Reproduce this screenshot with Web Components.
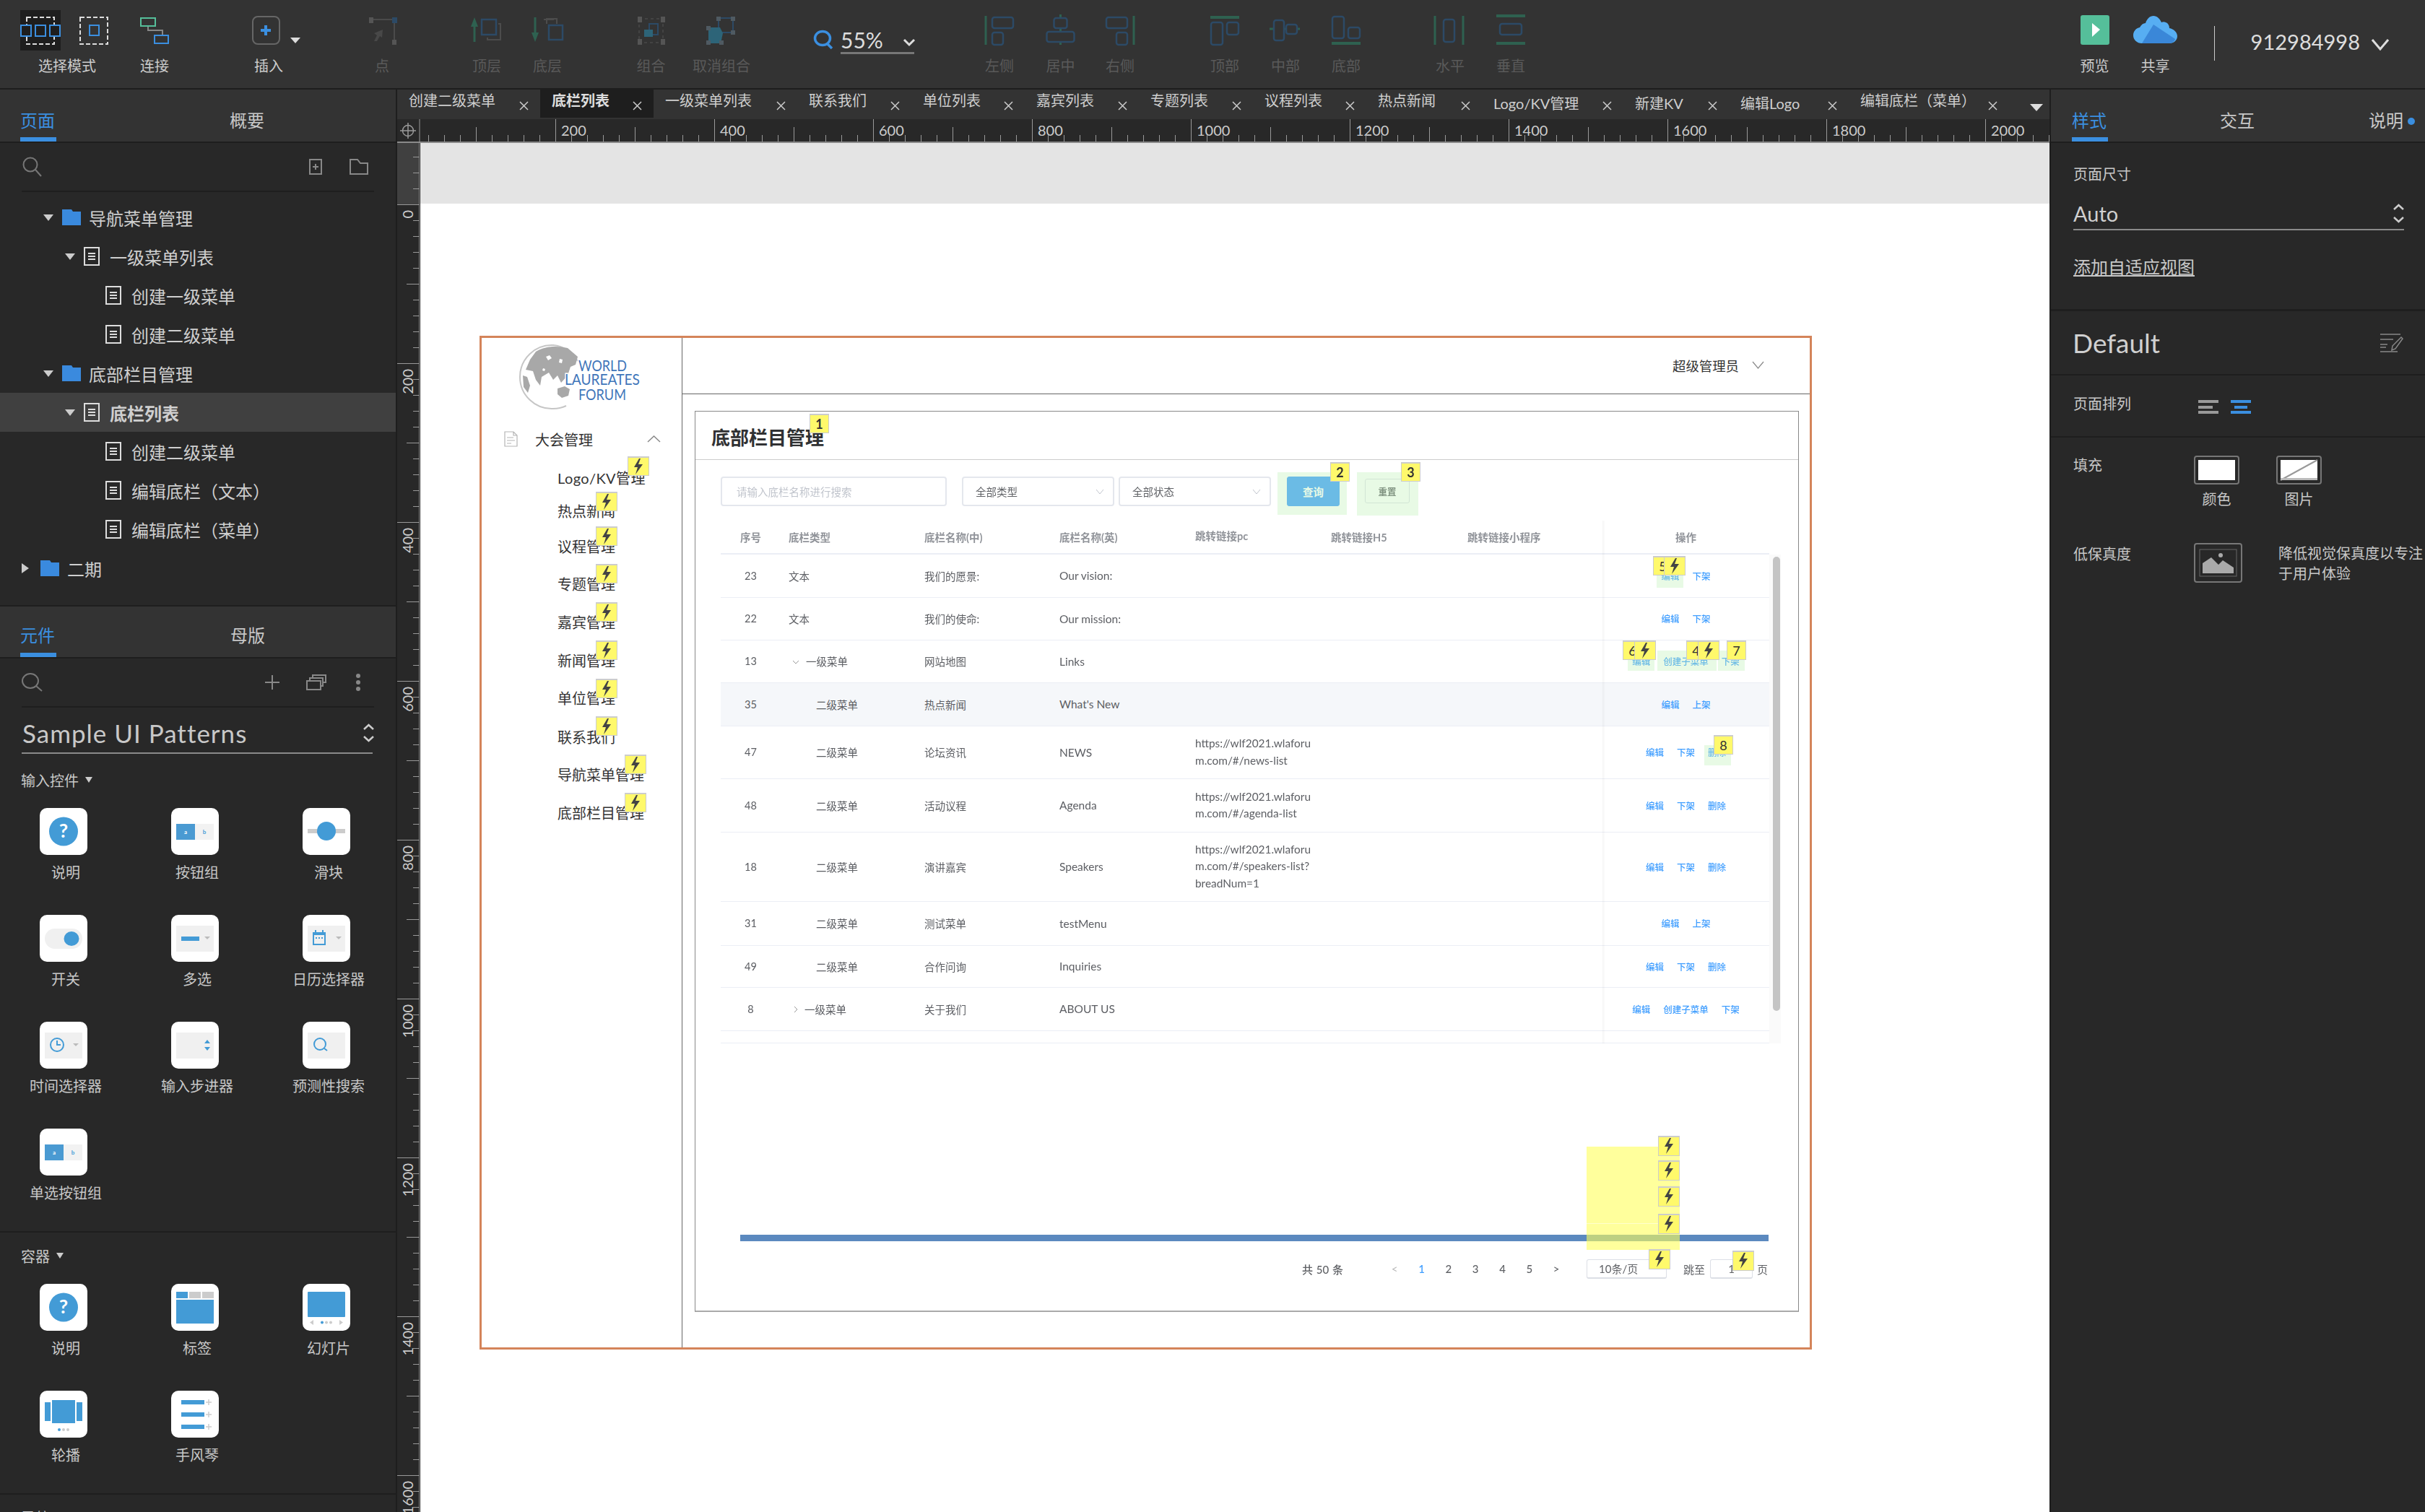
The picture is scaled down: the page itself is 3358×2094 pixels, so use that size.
<!DOCTYPE html>
<html lang="zh-CN">
<head>
<meta charset="utf-8">
<title>底栏列表</title>
<style>
  html, body { margin: 0; padding: 0; background: #1e1e1e; }
  body { width: 3358px; height: 2094px; overflow: hidden; font-family: "Lato", "Noto Sans CJK SC", sans-serif; }
  svg { display: block; flex: none; overflow: visible; }
</style>
</head>
<body>

<ax-app>
  <ax-toolbar slot="top">
    <ax-tool label="选择模式" style="margin-left:53px">
      <svg width="130" height="40" viewBox="28 22 130 40" fill="none">
        <rect x="28" y="14" width="56" height="56" fill="#1e1e1e"/>
        <rect x="37" y="24" width="38" height="37" stroke="#ddd" stroke-width="2" stroke-dasharray="6 3"/>
        <path d="M29 35h14v15h-14zM49 35h14v15h-14zM69 35h14v15h-14z" stroke="#3b8fe0" stroke-width="2" fill="#1e1e1e"/>
        <rect x="111" y="24" width="38" height="37" stroke="#ddd" stroke-width="2" stroke-dasharray="6 3"/>
        <rect x="124" y="35" width="13" height="14" stroke="#3b8fe0" stroke-width="2"/>
      </svg>
    </ax-tool>
    <ax-tool label="连接" style="margin-left:41px">
      <svg width="40" height="40" viewBox="194 22 40 40" fill="none">
        <path d="M205 36v6h20v7" stroke="#888" stroke-width="2"/>
        <rect x="195" y="25" width="20" height="11" stroke="#55bf9a" stroke-width="2"/>
        <rect x="214" y="49" width="19" height="11" stroke="#3b8fe0" stroke-width="2"/>
      </svg>
    </ax-tool>
    <ax-tool label="插入" style="margin-left:78px">
      <svg width="94" height="40" viewBox="325 22 94 40" fill="none">
        <rect x="350" y="23" width="37" height="38" rx="7" stroke="#666" stroke-width="2"/>
        <path d="M368 35v14M361 42h14" stroke="#3b8fe0" stroke-width="4"/>
        <path d="M402 52h14l-7 8z" fill="#ddd"/>
      </svg>
    </ax-tool>
    <ax-tool off label="点" style="margin-left:77px">
      <svg width="40" height="40" viewBox="509 22 40 40" fill="none">
        <path d="M517 27h27M546 32v23" stroke="#4a4a4a" stroke-width="2"/>
        <rect x="511" y="24" width="6" height="8" fill="#555"/>
        <rect x="543" y="24" width="7" height="8" fill="#2c4a66"/>
        <rect x="543" y="55" width="6" height="7" fill="#555"/>
        <path d="M530 41l-12 5 4 3-4 8 4 0 4-7 3 2z" fill="#484848"/>
      </svg>
    </ax-tool>
    <ax-tool off label="顶层" style="margin-left:65px">
      <svg width="44" height="40" viewBox="652 22 44 40" fill="none">
        <path d="M657 58V30" stroke="#2e6150" stroke-width="3"/><path d="M652 37l5-13 5 13z" fill="#2e6150"/>
        <path d="M690 33h3v22h-18v-3M686 30v0" stroke="#4c4c4c" stroke-width="2"/>
        <rect x="667" y="27" width="20" height="21" stroke="#2c4a66" stroke-width="2.5" fill="#333"/>
      </svg>
    </ax-tool>
    <ax-tool off label="底层" style="margin-left:4px">
      <svg width="44" height="40" viewBox="736 22 44 40" fill="none">
        <path d="M741 24v28" stroke="#2e6150" stroke-width="3"/><path d="M736 45l5 13 5-13z" fill="#2e6150"/>
        <path d="M757 33v-7h14v7M753 27h14" stroke="#4c4c4c" stroke-width="2"/>
        <rect x="760" y="35" width="19" height="20" stroke="#2c4a66" stroke-width="2.5"/>
      </svg>
    </ax-tool>
    <ax-tool off label="组合" style="margin-left:63.5px">
      <svg width="40" height="40" viewBox="882 22 40 40" fill="none">
        <rect x="885" y="26" width="33" height="33" stroke="#4a4a4a" stroke-width="1.5" stroke-dasharray="4 4"/>
        <path d="M883 23h6v8h-6zM915 23h6v8h-6zM883 54h6v8h-6zM915 54h6v8h-6z" fill="#555"/>
        <rect x="899" y="33" width="12" height="15" stroke="#2c4a66" stroke-width="2"/>
        <rect x="892" y="41" width="12" height="10" fill="#2d6478"/>
      </svg>
    </ax-tool>
    <ax-tool off label="取消组合" style="margin-left:17.5px">
      <svg width="40" height="40" viewBox="979 22 40 40" fill="none">
        <rect x="995" y="25" width="20" height="20" stroke="#2c4a66" stroke-width="2"/>
        <path d="M981 38h16l4 8-3 14h-17z" fill="#2d6478"/>
        <path d="M978 36h6v6h-6zM978 56h6v6h-6zM996 56h6v6h-6zM992 23h6v6h-6zM1012 23h6v6h-6zM1012 42h6v6h-6z" fill="#4f5a62"/>
      </svg>
    </ax-tool>
    <ax-zoom-box style="margin-left:88px"></ax-zoom-box>
    <ax-tool off label="左侧" style="margin-left:76px">
      <svg width="44" height="40" viewBox="1362 22 44 40" fill="none" stroke="#2c4a66" stroke-width="2.5">
        <path d="M1365 22v40" stroke="#2e6150" stroke-width="3"/>
        <rect x="1374" y="24" width="29" height="15" rx="3"/><rect x="1374" y="45" width="15" height="17" rx="3"/>
      </svg>
    </ax-tool>
    <ax-tool off label="居中" style="margin-left:4.5px">
      <svg width="44" height="40" viewBox="1446.5 22 44 40" fill="none" stroke="#2c4a66" stroke-width="2.5">
        <path d="M1468 20v42" stroke="#2e6150" stroke-width="3"/>
        <rect x="1459" y="25" width="18" height="14" rx="3" fill="#333"/><rect x="1449" y="44" width="38" height="14" rx="3" fill="#333"/>
      </svg>
    </ax-tool>
    <ax-tool off label="右侧" style="margin-left:2.5px">
      <svg width="44" height="40" viewBox="1529 22 44 40" fill="none" stroke="#2c4a66" stroke-width="2.5">
        <path d="M1570 22v40" stroke="#2e6150" stroke-width="3"/>
        <rect x="1532" y="24" width="29" height="15" rx="3"/><rect x="1546" y="45" width="15" height="17" rx="3"/>
      </svg>
    </ax-tool>
    <ax-tool off label="顶部" style="margin-left:65px">
      <svg width="44" height="40" viewBox="1674 22 44 40" fill="none" stroke="#2c4a66" stroke-width="2.5">
        <path d="M1676 24h40" stroke="#2e6150" stroke-width="4"/>
        <rect x="1677" y="31" width="16" height="31" rx="3"/><rect x="1699" y="31" width="16" height="17" rx="3"/>
      </svg>
    </ax-tool>
    <ax-tool off label="中部" style="margin-left:4px">
      <svg width="44" height="40" viewBox="1758 22 44 40" fill="none" stroke="#2c4a66" stroke-width="2.5">
        <path d="M1758 40h42" stroke="#2e6150" stroke-width="3"/>
        <rect x="1764" y="28" width="14" height="28" rx="3" fill="#333"/><rect x="1781" y="34" width="15" height="13" rx="3" fill="#333"/>
      </svg>
    </ax-tool>
    <ax-tool off label="底部" style="margin-left:4px">
      <svg width="44" height="40" viewBox="1842 22 44 40" fill="none" stroke="#2c4a66" stroke-width="2.5">
        <path d="M1844 60h40" stroke="#2e6150" stroke-width="4"/>
        <rect x="1845" y="23" width="16" height="30" rx="3"/><rect x="1867" y="38" width="16" height="15" rx="3"/>
      </svg>
    </ax-tool>
    <ax-tool off label="水平" style="margin-left:64px">
      <svg width="44" height="40" viewBox="1986 22 44 40" fill="none" stroke="#2c4a66" stroke-width="2.5">
        <path d="M1987 22v40M2026 22v40" stroke="#2e6150" stroke-width="3"/>
        <rect x="1999" y="27" width="15" height="31" rx="3"/>
      </svg>
    </ax-tool>
    <ax-tool off label="垂直" style="margin-left:4px">
      <svg width="44" height="40" viewBox="2070 22 44 40" fill="none" stroke="#2c4a66" stroke-width="2.5">
        <path d="M2072 22h40M2072 60h40" stroke="#2e6150" stroke-width="4"/>
        <rect x="2077" y="33" width="30" height="15" rx="3"/>
      </svg>
    </ax-tool>

    <ax-tool label="预览" style="margin-left:auto">
      <svg width="40" height="40" viewBox="2881 22 40 40">
        <rect x="2881" y="21" width="40" height="41" rx="3" fill="#55bf9a"/>
        <path d="M2897 32l11 9-11 10z" fill="#fff"/>
      </svg>
    </ax-tool>
    <ax-tool label="共享" style="margin-left:4px">
      <svg width="62" height="40" viewBox="2954 22 62 40">
        <path d="M2966 60c-7 0-12-5-12-11 0-6 4-10 9-11 2-4 5-6 8-6 2-6 6-10 11-10 5 0 9 4 11 9 2-1 4-1 6 0 3 1 5 4 5 8 6 1 11 6 11 11 0 6-5 10-11 10z" fill="#57aef2"/>
        <path d="M2982 34l30 20c-1 4-5 6-9 6h-37z" fill="#3a87d8"/>
      </svg>
    </ax-tool>
    <ax-user style="margin-left:41px">912984998</ax-user>
  </ax-toolbar>

  <ax-left slot="left">
    <ax-phead>
      <ax-ptab active style="margin-left:28px">页面</ax-ptab>
      <ax-ptab style="margin-left:240px">概要</ax-ptab>
    </ax-phead>
    <ax-searchrow>
      <svg width="28" height="28" viewBox="0 0 28 28" fill="none" stroke="#777" stroke-width="2"><circle cx="12" cy="11" r="9.5"/><path d="M19 18l8 9"/></svg>
      <svg width="18" height="22" viewBox="0 0 18 22" fill="none" stroke="#888" stroke-width="2" style="margin-left:auto"><rect x="1" y="1" width="16" height="20"/><path d="M9 7v8M5 11h8"/></svg>
      <svg width="26" height="22" viewBox="0 0 26 22" fill="none" stroke="#888" stroke-width="2" style="margin:0 8px 0 38px"><path d="M1 21V1h10l4 5h10v15z"/></svg>
    </ax-searchrow>
    <ax-tree>
      <ax-tree-row lv="0" arrow="down" icon="folder">导航菜单管理</ax-tree-row>
      <ax-tree-row lv="1" arrow="down" icon="doc">一级菜单列表</ax-tree-row>
      <ax-tree-row lv="2" icon="doc">创建一级菜单</ax-tree-row>
      <ax-tree-row lv="2" icon="doc">创建二级菜单</ax-tree-row>
      <ax-tree-row lv="0" arrow="down" icon="folder">底部栏目管理</ax-tree-row>
      <ax-tree-row lv="1" arrow="down" icon="doc" selected>底栏列表</ax-tree-row>
      <ax-tree-row lv="2" icon="doc">创建二级菜单</ax-tree-row>
      <ax-tree-row lv="2" icon="doc">编辑底栏（文本）</ax-tree-row>
      <ax-tree-row lv="2" icon="doc">编辑底栏（菜单）</ax-tree-row>
      <ax-tree-row lv="-1" arrow="right" icon="folder">二期</ax-tree-row>
    </ax-tree>
    <ax-phead small>
      <ax-ptab small active style="margin-left:28px">元件</ax-ptab>
      <ax-ptab small style="margin-left:241px">母版</ax-ptab>
    </ax-phead>
    <ax-searchrow>
      <svg width="28" height="26" viewBox="0 0 28 26" fill="none" stroke="#777" stroke-width="2"><ellipse cx="12" cy="11" rx="11" ry="10"/><path d="M20 18l8 7"/></svg>
      <svg width="20" height="20" viewBox="0 0 20 20" stroke="#888" stroke-width="2" style="margin-left:auto"><path d="M10 0v20M0 10h20"/></svg>
      <svg width="28" height="22" viewBox="0 0 28 22" fill="none" stroke="#888" stroke-width="2" style="margin-left:37px"><rect x="1" y="9" width="19" height="12"/><path d="M5 9V5h18v11h-3M9 5V1h18v10h-4"/></svg>
      <svg width="6" height="24" viewBox="0 0 6 24" fill="#888" style="margin:0 19px 0 41px"><circle cx="3" cy="3" r="3"/><circle cx="3" cy="12" r="3"/><circle cx="3" cy="21" r="3"/></svg>
    </ax-searchrow>
    <ax-libselect>Sample UI Patterns</ax-libselect>
    <ax-group title="输入控件">
      <ax-widget label="说明"><svg width="66" height="65" viewBox="0 0 66 65"><ellipse cx="33" cy="32.5" rx="20" ry="20" fill="#439bd6"/><text x="33" y="41" text-anchor="middle" font-size="27" font-weight="700" fill="#fff" font-family="Lato">?</text></svg></ax-widget>
      <ax-widget label="按钮组"><svg width="66" height="65" viewBox="0 0 66 65"><rect x="7" y="22" width="26" height="22" fill="#4a9ad2"/><rect x="33" y="22" width="26" height="22" fill="#f2f2f2"/><text x="20" y="36" text-anchor="middle" font-size="8" font-weight="700" fill="#fff" font-family="Lato">a</text><text x="46" y="36" text-anchor="middle" font-size="8" font-weight="700" fill="#439bd6" font-family="Lato">b</text></svg></ax-widget>
      <ax-widget label="滑块"><svg width="66" height="65" viewBox="0 0 66 65"><rect x="7" y="29" width="52" height="6" fill="#ccc"/><circle cx="33" cy="32" r="13" fill="#439bd6"/></svg></ax-widget>
      <ax-widget label="开关"><svg width="66" height="65" viewBox="0 0 66 65"><rect x="7" y="19" width="52" height="28" rx="14" fill="#f0f0f0"/><ellipse cx="44" cy="33" rx="10.5" ry="10" fill="#439bd6"/></svg></ax-widget>
      <ax-widget label="多选"><svg width="66" height="65" viewBox="0 0 66 65"><rect x="7" y="15" width="52" height="36" fill="#f0f0f0"/><rect x="14" y="30" width="25" height="6" fill="#439bd6"/><path d="M46 30h8l-4 4z" fill="#bbb"/></svg></ax-widget>
      <ax-widget label="日历选择器"><svg width="66" height="65" viewBox="0 0 66 65"><rect x="7" y="15" width="52" height="36" fill="#f0f0f0"/><path d="M14 24h18v18H14z" fill="#439bd6"/><path d="M18 21v4M28 21v4" stroke="#439bd6" stroke-width="2"/><rect x="16" y="28" width="14" height="12" fill="#f0f0f0"/><path d="M18 32h2M22 32h2M26 32h2" stroke="#439bd6" stroke-width="2"/><path d="M46 30h8l-4 4z" fill="#bbb"/></svg></ax-widget>
      <ax-widget label="时间选择器"><svg width="66" height="65" viewBox="0 0 66 65"><rect x="7" y="15" width="52" height="36" fill="#f0f0f0"/><circle cx="24" cy="32" r="9" fill="none" stroke="#439bd6" stroke-width="2"/><path d="M24 26v6h5" fill="none" stroke="#439bd6" stroke-width="2"/><path d="M46 30h8l-4 4z" fill="#bbb"/></svg></ax-widget>
      <ax-widget label="输入步进器"><svg width="66" height="65" viewBox="0 0 66 65"><rect x="7" y="15" width="52" height="36" fill="#f0f0f0"/><path d="M46 30l4-5 4 5zM46 35h8l-4 5z" fill="#439bd6"/></svg></ax-widget>
      <ax-widget label="预测性搜索"><svg width="66" height="65" viewBox="0 0 66 65"><rect x="7" y="15" width="52" height="36" fill="#f0f0f0"/><ellipse cx="24" cy="31" rx="8" ry="8" fill="none" stroke="#439bd6" stroke-width="2"/><path d="M30 37l4 3" stroke="#439bd6" stroke-width="2"/></svg></ax-widget>
      <ax-widget label="单选按钮组"><svg width="66" height="65" viewBox="0 0 66 65"><rect x="7" y="22" width="26" height="22" fill="#4a9ad2"/><rect x="33" y="22" width="26" height="22" fill="#f2f2f2"/><text x="20" y="36" text-anchor="middle" font-size="8" font-weight="700" fill="#fff" font-family="Lato">a</text><text x="46" y="36" text-anchor="middle" font-size="8" font-weight="700" fill="#439bd6" font-family="Lato">b</text></svg></ax-widget>
    </ax-group>
    <ax-group title="容器" style="padding-top:20px">
      <ax-widget label="说明"><svg width="66" height="65" viewBox="0 0 66 65"><ellipse cx="33" cy="32.5" rx="20" ry="20" fill="#439bd6"/><text x="33" y="41" text-anchor="middle" font-size="27" font-weight="700" fill="#fff" font-family="Lato">?</text></svg></ax-widget>
      <ax-widget label="标签"><svg width="66" height="65" viewBox="0 0 66 65"><rect x="7" y="11" width="16" height="9" fill="#439bd6"/><rect x="25" y="11" width="16" height="9" fill="#ccc"/><rect x="43" y="11" width="16" height="9" fill="#ccc"/><rect x="7" y="22" width="52" height="33" fill="#439bd6"/></svg></ax-widget>
      <ax-widget label="幻灯片"><svg width="66" height="65" viewBox="0 0 66 65"><rect x="7" y="11" width="52" height="35" rx="1" fill="#439bd6"/><path d="M15 50v7l-5-3.500zM51 50v7l5-3.500z" fill="#ccc"/><circle cx="27" cy="53.500" r="2" fill="#439bd6"/><circle cx="33" cy="53.500" r="2" fill="#ccc"/><circle cx="39" cy="53.500" r="2" fill="#ccc"/></svg></ax-widget>
      <ax-widget label="轮播"><svg width="66" height="65" viewBox="0 0 66 65"><rect x="7" y="16" width="8" height="26" fill="#439bd6"/><rect x="17" y="13" width="32" height="32" fill="#439bd6"/><rect x="51" y="16" width="8" height="26" fill="#439bd6"/><circle cx="27" cy="54" r="2" fill="#439bd6"/><circle cx="33" cy="54" r="2" fill="#ccc"/><circle cx="39" cy="54" r="2" fill="#ccc"/></svg></ax-widget>
      <ax-widget label="手风琴"><svg width="66" height="65" viewBox="0 0 66 65"><path d="M14 13h32v6H14zM14 30h32v6H14zM14 47h32v6H14z" fill="#439bd6"/><path d="M48 16h8M52 12v8M48 33h8M52 29v8M48 50h8M52 46v8" stroke="#ccc" stroke-width="1.500"/></svg></ax-widget>
    </ax-group>
    <ax-group title="导航" style="padding-top:19px"></ax-group>
  </ax-left>

  <ax-center slot="center">
    <ax-tabs>
      <ax-tab w="198">创建二级菜单</ax-tab>
      <ax-tab w="157" active>底栏列表</ax-tab>
      <ax-tab w="199">一级菜单列表</ax-tab>
      <ax-tab w="158">联系我们</ax-tab>
      <ax-tab w="157">单位列表</ax-tab>
      <ax-tab w="158">嘉宾列表</ax-tab>
      <ax-tab w="158">专题列表</ax-tab>
      <ax-tab w="157">议程列表</ax-tab>
      <ax-tab w="160">热点新闻</ax-tab>
      <ax-tab w="196" low>Logo/KV管理</ax-tab>
      <ax-tab w="146" low>新建KV</ax-tab>
      <ax-tab w="166" low>编辑Logo</ax-tab>
      <ax-tab w="222">编辑底栏（菜单）</ax-tab>
    </ax-tabs>
    <ax-ruler-h></ax-ruler-h>
    <ax-ruler-v></ax-ruler-v>
    <ax-canvas>
      <wf-artboard>
        <wf-sidebar>
          <svg slot="logo" width="277" height="128" viewBox="667 468 277 128">
            <path d="M800 500A44 44 0 0 0 766 478A44 44 0 0 0 720 522A44 44 0 0 0 766 566A44 44 0 0 0 784 562" fill="none" stroke="#c6c6c6" stroke-width="2"/>
            <path d="M742 487C752 480 770 478 786 482L800 494L797 505L790 508L786 520L777 530L772 520L766 526L760 516L750 522L748 534L742 526L738 514L728 512L734 498Z" fill="#a8a8a8"/>
            <path d="M724 520l6 2 4 12-3 10-6-8z" fill="#a8a8a8"/>
            <path d="M772 538l10-3 7 4-2 9-9 3-6-5z" fill="#a8a8a8"/>
            <path d="M756 494l5-2 3 4-5 3zM775 497l4 1-1 5-4-1zM752 510l3 1-1 3-3-1z" fill="#fff"/>
            <g fill="#3f76ba" font-family="Lato" font-size="22" stroke="#fff" stroke-width="3" paint-order="stroke">
              <text x="801" y="514" textLength="67" lengthAdjust="spacingAndGlyphs">WORLD</text>
              <text x="782" y="533" textLength="104" lengthAdjust="spacingAndGlyphs">LAUREATES</text>
              <text x="801" y="554" textLength="66" lengthAdjust="spacingAndGlyphs">FORUM</text>
            </g>
          </svg>
          <wf-menu-head>大会管理</wf-menu-head>
          <wf-menu-item h="48" style="margin-top:18px;letter-spacing:.4px">Logo/KV管理<wf-note bolt style="left:97px;top:-6px"></wf-note></wf-menu-item>
          <wf-menu-item h="45">热点新闻<wf-note bolt style="left:52.500px;top:-5px"></wf-note></wf-menu-item>
          <wf-menu-item h="52">议程管理<wf-note bolt style="left:52.500px;top:-2px"></wf-note></wf-menu-item>
          <wf-menu-item h="53">专题管理<wf-note bolt style="left:52.500px;top:-2px"></wf-note></wf-menu-item>
          <wf-menu-item h="52">嘉宾管理<wf-note bolt style="left:52.500px;top:-2px"></wf-note></wf-menu-item>
          <wf-menu-item h="54">新闻管理<wf-note bolt style="left:52.500px;top:-1px"></wf-note></wf-menu-item>
          <wf-menu-item h="51">单位管理<wf-note bolt style="left:52.500px;top:-2px"></wf-note></wf-menu-item>
          <wf-menu-item h="56">联系我们<wf-note bolt style="left:52.500px;top:-1px"></wf-note></wf-menu-item>
          <wf-menu-item h="49">导航菜单管理<wf-note bolt style="left:93px;top:-4px"></wf-note></wf-menu-item>
          <wf-menu-item h="56">底部栏目管理<wf-note bolt style="left:93px;top:0"></wf-note></wf-menu-item>
        </wf-sidebar>
        <wf-main>
          <wf-topbar>超级管理员</wf-topbar>
          <wf-card>
            <wf-card-head>底部栏目管理<wf-note n="1" style="left:158px;top:3px"></wf-note></wf-card-head>
            <wf-filter>
              <wf-field w="313" ph>请输入底栏名称进行搜索</wf-field>
              <wf-field w="211" chevron style="margin-left:21px">全部类型</wf-field>
              <wf-field w="211" chevron style="margin-left:6px">全部状态</wf-field>
              <wf-btn primary style="margin-left:22px">查询<wf-hot style="left:-14px;top:-7px;width:96px;height:59px"></wf-hot><wf-note n="2" style="left:59px;top:-21px"></wf-note></wf-btn>
              <wf-btn style="margin-left:35px">重置<wf-hot style="left:-12px;top:-10px;width:85px;height:60px"></wf-hot><wf-note n="3" style="left:49px;top:-24px"></wf-note></wf-btn>
            </wf-filter>
            <wf-table>
              <wf-row slot="head" head style="height:47px" no="序号" type="底栏类型" cn="底栏名称(中)" en="底栏名称(英)" pc="跳转链接pc" h5="跳转链接H5" mini="跳转链接小程序" ops="操作"></wf-row>
              <wf-row style="height:60px" no="23" type="文本" cn="我们的愿景:" en="Our vision:" ops="编辑 下架">
                <wf-hot style="left:1296px;top:19px;width:37px;height:27px"></wf-hot>
                <wf-note n="5" style="left:1291px;top:2.500px"></wf-note><wf-note bolt style="left:1306px;top:2.500px"></wf-note>
              </wf-row>
              <wf-row style="height:59px" no="22" type="文本" cn="我们的使命:" en="Our mission:" ops="编辑 下架"></wf-row>
              <wf-row style="height:59px" no="13" type="一级菜单" lv="1" cn="网站地图" en="Links" ops="编辑 创建子菜单 下架">
                <wf-hot style="left:1256px;top:14px;width:37px;height:28px"></wf-hot><wf-hot style="left:1297px;top:14px;width:82px;height:28px"></wf-hot><wf-hot style="left:1381px;top:14px;width:37px;height:28px"></wf-hot>
                <wf-note n="6" style="left:1249px;top:0"></wf-note><wf-note bolt style="left:1264.500px;top:0"></wf-note>
                <wf-note n="4" style="left:1337px;top:0"></wf-note><wf-note bolt style="left:1352.500px;top:0"></wf-note>
                <wf-note n="7" style="left:1393px;top:0"></wf-note>
              </wf-row>
              <wf-row style="height:60.500px" hover no="35" type="二级菜单" lv="2" cn="热点新闻" en="What's New" ops="编辑 上架"></wf-row>
              <wf-row style="height:72.500px" no="47" type="二级菜单" lv="2" cn="论坛资讯" en="NEWS" pc="https://wlf2021.wlaforu|m.com/#/news-list" ops="编辑 下架 删除">
                <wf-hot style="left:1362px;top:25.500px;width:37px;height:28px"></wf-hot>
                <wf-note n="8" style="left:1375px;top:11.500px"></wf-note>
              </wf-row>
              <wf-row style="height:74px" no="48" type="二级菜单" lv="2" cn="活动议程" en="Agenda" pc="https://wlf2021.wlaforu|m.com/#/agenda-list" ops="编辑 下架 删除"></wf-row>
              <wf-row style="height:96px" no="18" type="二级菜单" lv="2" cn="演讲嘉宾" en="Speakers" pc="https://wlf2021.wlaforu|m.com/#/speakers-list?|breadNum=1" ops="编辑 下架 删除"></wf-row>
              <wf-row style="height:61px" no="31" type="二级菜单" lv="2" cn="测试菜单" en="testMenu" ops="编辑 上架"></wf-row>
              <wf-row style="height:58px" no="49" type="二级菜单" lv="2" cn="合作问询" en="Inquiries" ops="编辑 下架 删除"></wf-row>
              <wf-row style="height:60px" no="8" type="一级菜单" lv="1" closed cn="关于我们" en="ABOUT US" ops="编辑 创建子菜单 下架"></wf-row>
              <wf-row style="height:17px" blank></wf-row>
            </wf-table>
            <wf-bar></wf-bar>
            <wf-pager></wf-pager>
          </wf-card>
        </wf-main>
      </wf-artboard>
    </ax-canvas>
  </ax-center>

  <ax-right slot="right"></ax-right>
</ax-app>

<script>
// shared bolt used by the note badges
const BOLT = '<svg width="16" height="22" viewBox="0 0 16 22"><path d="M9 0L2 12h5l-3 10 10-14H8l3-8z" fill="#444"/></svg>';
const CJK = '"Lato", "Noto Sans CJK SC", sans-serif';

class Box extends HTMLElement {
    connectedCallback() {
        if (this.shadowRoot) return;
        let root = this.attachShadow({mode: 'open'});
        root.innerHTML = '<style>' + this.css() + '</style>' + this.html();
    }
    css() { return ':host{display:block}'; }
    html() { return '<slot></slot>'; }
}

function reg(name, css, html) {
    customElements.define(name, class extends Box {
        css() { return typeof css === 'function' ? css.call(this) : css; }
        html() { return typeof html === 'function' ? html.call(this) : (html || '<slot></slot>'); }
    });
}

/* --- app frame --- */
reg('ax-app', `:host{display:grid;grid-template-columns:548px 2290px 520px;grid-template-rows:122px 1970px;row-gap:2px;width:3358px;height:2094px;background:#1e1e1e;overflow:hidden;font-family:${CJK}}
  .top{grid-column:1/4}.c{margin-left:2px;min-width:0}.r{margin-left:2px}`,
  `<div class="top"><slot name="top"></slot></div><div><slot name="left"></slot></div><div class="c"><slot name="center"></slot></div><div class="r"><slot name="right"></slot></div>`);

reg('ax-toolbar', `:host{display:flex;height:122px;background:#333}`);

reg('ax-tool', `:host{display:flex;flex:none;flex-direction:column;align-items:center;width:80px;padding-top:22px;color:#ccc;font-size:20px}
  :host([off]){color:#5a5a5a}
  .icon{height:40px;display:flex;justify-content:center}
  .label{margin-top:17px;line-height:24px;white-space:nowrap}`,
  function() { return `<div class="icon"><slot></slot></div><div class="label">${this.getAttribute('label')}</div>`; });

reg('ax-zoom-box', `:host{display:flex;flex:none;align-items:flex-start;width:141px;height:122px}
  .v{box-sizing:border-box;width:102px;height:33px;margin:42px 0 0 10px;border-bottom:3px solid #777;color:#ddd;font-size:30px;line-height:26px;position:relative}
  svg{display:block;overflow:visible}`,
  `<svg width="27" height="26" viewBox="0 0 27 26" fill="none" stroke="#3b8fe0" stroke-width="3.500" style="margin-top:42px;flex:none"><ellipse cx="12" cy="11" rx="10.500" ry="9.500"/><path d="M18 18l7 7"/></svg>
   <div class="v">55%<svg width="16" height="10" viewBox="0 0 16 10" fill="none" stroke="#ddd" stroke-width="3" style="position:absolute;right:-1px;top:12px"><path d="M1 1l7 7 7-7"/></svg></div>`);

reg('ax-user', `:host{display:flex;align-items:flex-start;flex:none;padding-right:50px;color:#ddd;font-size:29px}
  .d{width:1px;height:48px;margin-top:36px;background:#ccc;margin-right:50px}
  .t{margin-top:39px;line-height:38px;white-space:nowrap}
  svg{display:block;margin:54px 0 0 16px}`,
  `<div class="d"></div><div class="t"><slot></slot></div><svg width="24" height="16" viewBox="0 0 24 16" fill="none" stroke="#ddd" stroke-width="3"><path d="M1 1l11 13L23 1"/></svg>`);

/* --- left panel --- */
reg('ax-left', `:host{display:block;width:548px;height:1970px;background:#282828;overflow:hidden;color:#c8c8c8}`);

reg('ax-phead', `:host{display:flex;height:72px;background:#333;border-bottom:2px solid #1e1e1e}
  :host([small]){height:70px;margin-top:24px;border-top:2px solid #1e1e1e}`);

reg('ax-ptab', `:host{box-sizing:border-box;display:block;width:50px;height:72px;padding-top:28px;font-size:24px;line-height:30px;white-space:nowrap;color:#c8c8c8;border-bottom:6px solid transparent}
  :host([small]){height:70px;padding-top:25px}
  :host([active]){color:#3b8fe0;border-bottom-color:#3b8fe0}`);

reg('ax-searchrow', `:host{display:flex;align-items:center;height:66px;margin:0 30px;border-bottom:2px solid #1e1e1e;box-sizing:content-box}`);

reg('ax-tree', `:host{display:block;padding-top:8px}`);

reg('ax-tree-row', function() {
    let pad = 30 * (Number(this.getAttribute('lv')) + 2);
    let fold = this.getAttribute('icon') === 'folder';
    return `:host{display:flex;align-items:center;height:54px;padding-left:${pad}px;font-size:24px;white-space:nowrap;color:#cfcfcf}
      :host([selected]){background:#404040;font-weight:700}
      .a{width:14px;margin-right:12px;display:flex}
      .i{margin-right:${fold ? 11 : 14}px}
      svg{display:block;flex:none}`;
}, function() {
    let arrow = this.getAttribute('arrow');
    let a = '';
    if (arrow === 'down') a = '<svg width="14" height="9" viewBox="0 0 14 9"><path d="M0 0h14L7 9z" fill="#ccc"/></svg>';
    if (arrow === 'right') a = '<svg width="10" height="14" viewBox="0 0 10 14"><path d="M0 0l10 7-10 7z" fill="#ccc"/></svg>';
    let ic = this.getAttribute('icon') === 'folder'
        ? '<svg width="26" height="22" viewBox="0 0 26 22"><path d="M0 0h13l2 3h11v19H0z" fill="#3a8ade"/></svg>'
        : '<svg width="22" height="26" viewBox="0 0 22 26" fill="none" stroke="#ddd" stroke-width="2"><rect x="1" y="1" width="20" height="24"/><path d="M6 9h10M6 13h10M6 17h10"/></svg>';
    return `<div class="a">${a}</div><div class="i">${ic}</div><slot></slot>`;
});

reg('ax-libselect', `:host{display:flex;align-items:center;justify-content:space-between;box-sizing:border-box;height:64px;margin:0 32px 0 30px;padding:8px 0 0 1px;border-bottom:2px solid #8a8a8a;font-size:35px;letter-spacing:1px;color:#c8c8c8;white-space:nowrap}
  svg{display:block}`,
  `<slot></slot><svg width="15" height="26" viewBox="0 0 15 26" fill="none" stroke="#ccc" stroke-width="2.500" style="margin-right:-2px"><path d="M1 8l6.500-6L14 8M1 18l6.500 6 6.500-6"/></svg>`);

reg('ax-group', `:host{display:block;border-bottom:2px solid #1e1e1e;padding-top:24px;font-size:20px}
  .t{display:flex;align-items:center;height:24px;padding-left:29px;margin-bottom:27px;color:#c8c8c8}
  svg{display:block;margin-left:9px}
  .g{display:grid;grid-template-columns:repeat(3,182px);grid-auto-rows:148px;margin-bottom:-6px}`,
  function() { return `<div class="t">${this.getAttribute('title')}<svg width="10" height="8" viewBox="0 0 10 8"><path d="M0 0h10L5 8z" fill="#ccc"/></svg></div><div class="g"><slot></slot></div>`; });

reg('ax-widget', `:host{display:flex;flex-direction:column;align-items:center;color:#c8c8c8;font-size:20px}
  .i{margin-right:6px;width:66px;height:65px;border-radius:10px;background:#fff;overflow:hidden}
  .l{margin-top:12px;line-height:24px;white-space:nowrap}`,
  function() { return `<div class="i"><slot></slot></div><div class="l">${this.getAttribute('label')}</div>`; });

/* --- center: tabs, rulers, canvas --- */
reg('ax-center', `:host{display:grid;grid-template-columns:31px 2257px;grid-template-rows:41px 33px 1896px;width:2288px;height:1970px;overflow:hidden}
  ::slotted(ax-tabs){grid-column:1/3}
  ::slotted(ax-ruler-h){grid-column:1/3}`);

reg('ax-tabs', `:host{display:flex;height:41px;background:#333;overflow:hidden;position:relative;font-size:20px}
  svg{position:absolute;left:2261px;top:20px}`,
  `<slot></slot><svg width="18" height="10" viewBox="0 0 18 10"><path d="M0 0h18L9 10z" fill="#ddd"/></svg>`);

reg('ax-tab', function() {
    let lift = this.hasAttribute('low') ? 4 : 0;
    return `:host{box-sizing:border-box;display:flex;flex:none;justify-content:space-between;width:${this.getAttribute('w')}px;height:39px;padding:${lift}px 16px 0 16px;color:#cfcfcf;line-height:30px;white-space:nowrap}
      :host([active]){background:#1e1e1e;font-weight:700;color:#ddd}
      svg{display:block;margin:${16 - lift}px 0 0 0}`;
}, `<slot></slot><svg width="13" height="13" viewBox="0 0 13 13" fill="none" stroke="#ccc" stroke-width="1.500"><path d="M1 1l11 11M12 1L1 12"/></svg>`);

customElements.define('ax-ruler-h', class extends HTMLElement {
    constructor() {
        super();
        let root = this.attachShadow({mode: 'open'});
        let w = 2288, marks = '';
        // x here is relative to the strip, which starts at 550
        marks += '<path d="M31 0v33" stroke="#999"/>';
        for (let k = 2; 549 + 22 * k < 2838; k++) {
            let x = 549 + 22 * k - 550 + .5;
            let top = k % 10 == 0 ? 0 : k % 5 == 0 ? 11 : 22;
            marks += `<path d="M${x} ${top}V31" stroke="#999"/>`;
            if (k % 10 == 0) marks += `<text x="${x + 7.5}" y="23" font-size="20" fill="#ccc">${k * 20}</text>`;
        }
        root.innerHTML = `<style>:host{display:block;height:33px;background:#282828;font-family:${CJK}}
            svg{display:block}</style>
            <svg width="${w}" height="33" viewBox="0 0 ${w} 33" fill="none">
              <rect y="31" width="${w}" height="2" fill="#8a8a8a"/>
              <circle cx="15" cy="16" r="7.500" stroke="#999" stroke-width="1.500"/><path d="M15 5v22M4 16h22" stroke="#999" stroke-width="1.500"/>
              ${marks}
            </svg>`;
    }
});

customElements.define('ax-ruler-v', class extends HTMLElement {
    constructor() {
        super();
        let root = this.attachShadow({mode: 'open'});
        let marks = '';
        // y here is relative to the strip, which starts at 198
        for (let k = -3; 283 + 22 * k < 2094; k++) {
            let y = 283 + 22 * k - 198 + .5;
            let left = k % 10 == 0 ? 0 : k % 5 == 0 ? 13 : 22;
            marks += `<path d="M${left} ${y}H31" stroke="#999"/>`;
            if (k % 10 == 0 && k >= 0) marks += `<text transform="translate(22 ${y + 7.500}) rotate(-90)" text-anchor="end" font-size="20" fill="#ccc">${k * 20}</text>`;
        }
        root.innerHTML = `<style>:host{display:block;height:1896px;background:#282828;overflow:hidden;font-family:${CJK}}
            svg{display:block}</style>
            <svg width="31" height="1896" viewBox="0 0 31 1896" fill="none">
              <rect width="31" height="85" fill="#404040"/>
              <rect x="30" width="2" height="1896" fill="#8a8a8a"/>
              ${marks}
            </svg>`;
    }
});

reg('ax-canvas', `:host{display:block;box-sizing:border-box;height:1896px;margin-left:1px;background:linear-gradient(#e4e4e4 84px,#fff 84px);padding-top:.1px;overflow:hidden}`);

/* --- right panel --- */
reg('ax-right', `:host{display:block;width:518px;height:1970px;background:#282828;color:#c8c8c8;font-size:20px;font-family:${CJK}}
  .head{display:flex;height:72px;background:#333;border-bottom:2px solid #1e1e1e;font-size:24px;line-height:30px}
  .head div{box-sizing:border-box;width:50px;height:72px;padding-top:28px;white-space:nowrap;border-bottom:6px solid transparent}
  .head .on{color:#3b8fe0;border-bottom-color:#3b8fe0}
  .dot{display:inline-block;width:10px;height:10px;margin-left:6px;border-radius:50%;background:#3b8fe0;vertical-align:3px}
  section{box-sizing:content-box;border-bottom:2px solid #1e1e1e;padding:0 29px 0 31px;position:relative}
  .s1{height:230px;border-bottom-width:3px}
  .s2{height:87px;display:flex;align-items:center;justify-content:space-between;padding-left:30px}
  .s3{height:84px;display:flex}
  .s4{height:auto;border:0}
  .cap{line-height:24px}
  .size{display:flex;justify-content:space-between;align-items:center;box-sizing:border-box;height:48px;margin-top:18px;padding-top:3px;border-bottom:2px solid #8a8a8a;font-size:29px;color:#d0d0d0}
  .add{margin-top:36px;font-size:24px;line-height:30px;text-decoration:underline;color:#c8c8c8}
  .def{font-size:37px;color:#d0d0d0;line-height:42px}
  .row{display:flex}
  .sw{width:63px;text-align:center}
  svg{display:block}`,
  `<div class="head"><div class="on" style="margin-left:29px">样式</div><div style="margin-left:155px">交互</div><div style="margin-left:156px">说明<span class="dot"></span></div></div>
   <section class="s1">
     <div class="cap" style="padding-top:31px">页面尺寸</div>
     <div class="size">Auto<svg width="15" height="27" viewBox="0 0 15 27" fill="none" stroke="#ccc" stroke-width="2.500"><path d="M1 8l6.500-6L14 8M1 19l6.500 6 6.500-6"/></svg></div>
     <div class="add">添加自适应视图</div>
   </section>
   <section class="s2"><div class="def">Default</div>
     <svg width="32" height="26" viewBox="0 0 32 26" fill="none" stroke="#888" stroke-width="1.500" style="margin-right:1px"><path d="M0 1h28M0 8h18M0 15h10M0 19h8M0 25h24"/><path d="M29 5l2 2-10 14-5 2 1-6z"/></svg>
   </section>
   <section class="s3">
     <div class="cap" style="padding-top:27px;width:175px">页面排列</div>
     <svg width="73" height="19" viewBox="0 0 73 19" style="margin:34px 0 0 -2px">
       <path d="M0 0h28v4H0zM0 8h20v4H0zM0 15h28v4H0z" fill="#999"/>
       <path d="M45 0h28v4H45zM50 8h18v4H50zM45 15h28v4H45z" fill="#3b8fe0"/>
     </svg>
   </section>
   <section class="s4">
     <div class="row" style="height:118px">
       <div class="cap" style="padding-top:26px;width:167px">填充</div>
       <div class="sw" style="margin-top:25px">
         <svg width="63" height="40" viewBox="0 0 63 40"><rect x="1" y="1" width="61" height="38" rx="3" fill="none" stroke="#777" stroke-width="2"/><rect x="6" y="6" width="51" height="28" fill="#fff"/></svg>
         <div class="cap" style="margin-top:8px">颜色</div>
       </div>
       <div class="sw" style="margin:25px 0 0 51px">
         <svg width="63" height="40" viewBox="0 0 63 40"><rect x="1" y="1" width="61" height="38" rx="3" fill="none" stroke="#777" stroke-width="2"/><rect x="6" y="6" width="51" height="28" fill="#fff"/><path d="M6 34L57 6" stroke="#999" stroke-width="2"/><rect x="6" y="31" width="51" height="3" fill="#bbb"/></svg>
         <div class="cap" style="margin-top:8px">图片</div>
       </div>
     </div>
     <div class="row" style="margin-top:28px">
       <div class="cap" style="padding-top:3px;width:167px">低保真度</div>
       <svg width="67" height="55" viewBox="0 0 67 55" fill="none">
         <rect x="1" y="1" width="65" height="53" rx="3" stroke="#777" stroke-width="2"/><rect x="8" y="9" width="51" height="37" stroke="#666"/>
         <path d="M12 42V28l12-8 10 10 6-6 15 10v8z" fill="#aaa"/><circle cx="37" cy="17" r="3" fill="#aaa"/>
       </svg>
       <div class="cap" style="margin-left:50px;line-height:28px;white-space:nowrap;margin-right:-40px">降低视觉保真度以专注<br>于用户体验</div>
     </div>
   </section>`);

/* --- wireframe on the canvas --- */
reg('wf-artboard', `:host{display:flex;box-sizing:border-box;width:1845px;height:1404px;margin:267px 0 0 82px;border:3px solid #d4845a;background:#fff;color:#333;font-size:20px}`);

reg('wf-sidebar', `:host{display:block;box-sizing:content-box;width:277px;border-right:1px solid #666;flex:none}`,
  `<slot name="logo"></slot><slot></slot>`);

reg('wf-menu-head', `:host{display:flex;align-items:center;height:24px;padding:0 29px 0 31px;font-size:20px;color:#333}
  svg{display:block}`,
  `<svg width="19" height="22" viewBox="0 0 19 22" fill="none" stroke="#b5b5b5" stroke-width="1.200" style="margin-right:24px"><path d="M1 1h12l5 5v15H1zM13 1v5h5M4 9h9M4 13h11M4 17h6"/></svg><slot></slot><svg width="19" height="10" viewBox="0 0 19 10" fill="none" stroke="#888" stroke-width="1.500" style="margin-left:auto"><path d="M1 9l8.500-8L18 9"/></svg>`);

reg('wf-menu-item', function() {
    let h = this.getAttribute('h');
    return `:host{display:block;position:relative;height:${h}px;line-height:${h}px;margin-left:105px;font-size:20px;white-space:nowrap;color:#333}`;
});

reg('wf-note', `:host{position:absolute;box-sizing:border-box;display:flex;align-items:center;justify-content:center;width:30px;height:27px;background:#fff96b;border:1px solid #ccc;border-top-width:2px;color:#333;font-size:18px;line-height:1;letter-spacing:0;z-index:3}
  :host([n]){width:27px}
  svg{display:block}`,
  function() { return this.hasAttribute('bolt') ? BOLT : this.getAttribute('n'); });

reg('wf-hot', `:host{position:absolute;display:block;background:rgba(190,240,180,.35);z-index:2;pointer-events:none}`);

reg('wf-main', `:host{display:block;flex:1;min-width:0}`);

reg('wf-topbar', `:host{display:flex;align-items:center;justify-content:flex-end;box-sizing:border-box;height:78px;padding:0 63px 2px 0;border-bottom:1px solid #666;font-size:18.400px;color:#333}
  svg{display:block;margin-left:18px}`,
  `<slot></slot><svg width="17" height="11" viewBox="0 0 17 11" fill="none" stroke="#888" stroke-width="1.200"><path d="M1 1l7.500 9L16 1"/></svg>`);

reg('wf-card', `:host{display:block;box-sizing:border-box;height:1248px;margin:22.500px 15px 0 17px;border:1px solid #888;border-bottom:2px solid #aaa}`);

reg('wf-card-head', `:host{display:block;position:relative;box-sizing:border-box;height:67px;padding-left:22px;border-bottom:1px solid #ccc;font-size:26px;font-weight:700;line-height:72px;color:#303133}`);

reg('wf-filter', `:host{display:flex;align-items:flex-start;padding:23.500px 0 0 35px;filter:blur(.3px)}`);

reg('wf-field', function() {
    return `:host{box-sizing:border-box;display:flex;align-items:center;justify-content:space-between;width:${this.getAttribute('w')}px;height:41px;padding:0 12px 0 17px;border:2px solid #e4e7ed;border-radius:4px;color:#606266;font-size:14.500px;white-space:nowrap;flex:none}
      :host([ph]){color:#c0c4cc;padding-left:20px}`;
}, function() {
    let c = this.hasAttribute('chevron') ? '<svg width="12" height="8" viewBox="0 0 12 8" fill="none" stroke="#c0c4cc" style="display:block"><path d="M1 1l5 6 5-6"/></svg>' : '';
    return '<slot></slot>' + c;
});

reg('wf-btn', `:host{position:relative;box-sizing:border-box;display:flex;align-items:center;justify-content:center;flex:none;width:62px;height:34px;margin-top:3px;border:1px solid #dcdfe6;border-radius:3px;color:#606266;font-size:12.500px;font-weight:700}
  :host([primary]){width:73px;height:41px;margin-top:0;background:#409eff;border-color:#409eff;color:#fff;font-size:14.500px}`);

reg('wf-table', `:host{display:block;position:relative;width:1468px;margin:19.500px 0 0 35px;filter:blur(.3px)}
  .b{display:flex}
  .r{width:1452px;flex:none}
  .t{width:16px;background:#fafafa;position:relative}
  .th{position:absolute;left:5px;top:3px;width:10px;height:629px;border-radius:5px;background:#c4c4c4}
  .sh{position:absolute;left:1221px;top:0;bottom:0;width:4px;background:linear-gradient(90deg,rgba(0,0,0,.04),rgba(0,0,0,0))}`,
  `<slot name="head"></slot><div class="b"><div class="r"><slot></slot></div><div class="t"><div class="th"></div></div></div><div class="sh"></div>`);

reg('wf-row', `:host{display:grid;grid-template-columns:83px 199px 187px 188px 188px 189px 187px 231px;position:relative;box-sizing:border-box;width:1452px;align-items:center;border-bottom:1px solid #ebeef5;font-size:14.500px;color:#5c5e63}
  :host([head]){border-bottom:2px solid #ebeef5;font-weight:700;color:#909399}
  :host([hover]){background:#f5f7fa}
  .no{text-align:center}
  .ty{padding-left:11px;display:flex;align-items:center}
  .en{font-size:15.500px}
  :host([head]) .en{font-size:14.500px}
  .lk{line-height:23.500px;white-space:nowrap;font-size:15.400px}
  :host([head]) .lk{font-size:14.500px}
  .ops{display:flex;justify-content:center;gap:18px;color:#409eff;font-size:12.500px;font-weight:500}
  :host([head]) .ops{color:#909399;font-size:14.500px;font-weight:700}
  svg{display:block}`,
  function() {
      if (this.hasAttribute('blank')) return '<div style="grid-column:8;height:100%"></div>';
      let a = n => this.getAttribute(n) || '';
      let lv = a('lv');
      let arrow = '';
      if (lv === '1') {
          arrow = this.hasAttribute('closed')
              ? '<svg width="6" height="10" viewBox="0 0 6 10" fill="none" stroke="#999" style="margin:2px 9px 0 7px"><path d="M1 1l4 4-4 4"/></svg>'
              : '<svg width="10" height="6" viewBox="0 0 10 6" fill="none" stroke="#999" style="margin:2px 9px 0 5px"><path d="M1 1l4 4 4-4"/></svg>';
      }
      let pad = lv === '2' ? 38 : 0;
      let link = a('pc').split('|').join('<br>');
      let ops = a('ops').split(' ').map(o => `<span>${o}</span>`).join('');
      return `<div class="no">${a('no')}</div>
        <div class="ty" style="padding-left:${11 + pad}px">${arrow}${a('type')}</div>
        <div>${a('cn')}</div><div class="en">${a('en')}</div>
        <div class="lk">${link}</div><div>${a('h5')}</div><div>${a('mini')}</div>
        <div class="ops">${ops}</div><slot></slot>`;
  });

reg('wf-bar', `:host{display:block;position:relative;width:1424.500px;height:9px;margin:265px 0 0 61.500px;background:#5b89bf}
  .y{position:absolute;left:1172.500px;top:-122px;width:128.500px;height:143px;background:rgba(255,255,90,.6)}
  .l{position:absolute;left:0;right:0;top:106px;height:1px;background:rgba(255,255,255,.5)}`,
  `<div class="y"><div class="l"></div></div>
   <wf-note bolt style="left:1271.500px;top:-137px;height:28px"></wf-note>
   <wf-note bolt style="left:1271.500px;top:-103px;height:28px"></wf-note>
   <wf-note bolt style="left:1271.500px;top:-67px;height:28px"></wf-note>
   <wf-note bolt style="left:1271.500px;top:-29px;height:28px"></wf-note>`);

reg('wf-pager', `:host{display:flex;align-items:center;height:27px;margin:25px 0 0 840px;font-size:15px;color:#606266;white-space:nowrap;filter:blur(.25px)}
  .total{width:57px;margin-right:52.500px;word-spacing:1px;font-weight:500}
  .p{width:37.330px;text-align:center;font-weight:500}
  .on{color:#409eff}
  .a{color:#bbb}
  .box{position:relative;box-sizing:border-box;height:27px;border:1px solid #dcdfe6;border-bottom:2px solid #dcdfe6;border-radius:3px;display:flex;align-items:center;flex:none}`,
  `<div class="total">共 50 条</div>
   <div class="p a">&lt;</div><div class="p on">1</div><div class="p">2</div><div class="p">3</div><div class="p">4</div><div class="p">5</div><div class="p">&gt;</div>
   <div class="box" style="width:111px;margin-left:23.300px;padding-left:16px">10条/页<wf-note bolt style="left:85px;top:-15px;height:28px"></wf-note></div>
   <div style="margin-left:23px;width:31px">跳至</div>
   <div class="box" style="width:59px;margin-left:6px;justify-content:center">1<wf-note bolt style="left:30px;top:-13px;height:28px"></wf-note></div>
   <div style="margin-left:6px">页</div>`);
</script>
</body>
</html>
